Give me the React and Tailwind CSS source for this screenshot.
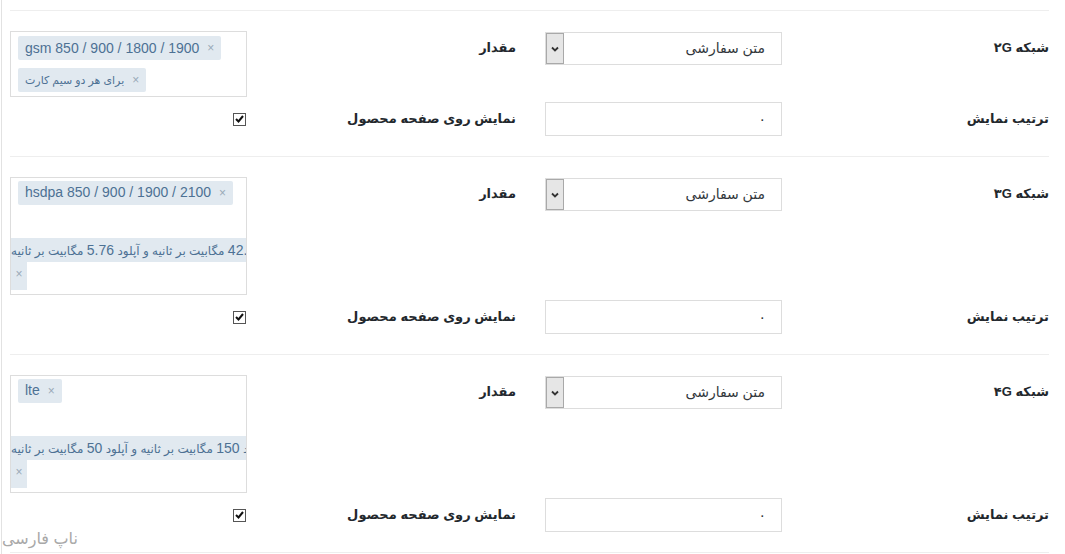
import React from 'react';

const fa = "font-['Liberation_Sans','DejaVu_Sans',sans-serif]";

function Label({ children, className = '' }) {
  return (
    <div className={`h-[33px] flex items-center text-[13px] font-bold text-[#23282d] ${className}`}>
      {children}
    </div>
  );
}

function Select() {
  return (
    <div className="mt-[1px] w-[237px] h-[33px] border border-[#dddddd] bg-white flex items-center">
      <span className="flex-1 pr-[16px] text-[14px] text-[#32373c]">متن سفارشی</span>
      <div className="w-[18px] h-full border border-[#a9a9a9] bg-[#e6e6e6] flex items-center justify-center">
        <svg width="8" height="6" viewBox="0 0 8 6">
          <path d="M1 1.5 L4 4.5 L7 1.5" stroke="#333" strokeWidth="1.8" fill="none" />
        </svg>
      </div>
    </div>
  );
}

function Tag({ children }) {
  return (
    <div className="inline-flex items-center h-[24px] px-[7px] bg-[#e1e9f0] rounded-[2px] text-[#4d7194]">
      {children}
      <span className="ml-[8px] text-[12px] text-[#9aa9b8]">×</span>
    </div>
  );
}

// long select2 choice: text runs past the box and the remove mark wraps below
function LongTag({ down, up }) {
  return (
    <div className="mt-auto w-full" dir="ltr">
      <div className="h-[24px] leading-[24px] bg-[#e1e9f0] overflow-hidden whitespace-nowrap text-left text-[12px] text-[#4d7194]">
        <span dir="rtl">
          دانلود <span className="text-[14px]">{down}</span> مگابیت بر ثانیه و آپلود <span className="text-[14px]">{up}</span> مگابیت بر ثانیه
        </span>
      </div>
      <div className="w-[16px] h-[28px] bg-[#e1e9f0] flex justify-center pt-[3px] text-[12px] text-[#9aa9b8]">×</div>
    </div>
  );
}

function Checkbox() {
  return (
    <div className="w-[13px] h-[13px] border border-[#555] bg-white flex items-center justify-center">
      <svg width="9" height="8" viewBox="0 0 9 8">
        <path d="M1 4 L3.5 6.5 L8 1" stroke="#111" strokeWidth="2" fill="none" />
      </svg>
    </div>
  );
}

function Section({ title, children, tall }) {
  return (
    <section className="border-t border-[#eeeeee] pt-[20px] pb-[20px]">
      <div className="grid grid-cols-[267px_237px_298px_238px] items-start">
        <Label>{title}</Label>
        <Select />
        <Label className="pr-[29px]">مقدار</Label>
        <div
          dir="ltr"
          className={`w-[237px] border border-[#dddddd] bg-white flex flex-col items-start ${tall ? 'h-[118px]' : 'h-[66px] px-[7px] pt-[4px] gap-[8px]'}`}
        >
          {children}
        </div>
      </div>
      <div className="grid grid-cols-[267px_237px_298px_238px] items-center mt-[5px]">
        <Label>ترتیب نمایش</Label>
        <div className="w-[237px] h-[34px] border border-[#dddddd] bg-white flex items-center pr-[15px] text-[14px] text-[#32373c]">
          ۰
        </div>
        <Label className="pr-[29px]">نمایش روی صفحه محصول</Label>
        <div className="flex justify-start pr-[1px]">
          <Checkbox />
        </div>
      </div>
    </section>
  );
}

export default function App() {
  return (
    <div className={`relative w-[1065px] h-[554px] overflow-hidden bg-white ${fa}`} dir="rtl">
      <div className="w-[1064px] h-full border-l border-[#e2e2e2] pt-[10px]">
        <div className="mr-[16px] ml-[8px]">
          <Section title="شبکه ۲G">
            <Tag><span className="text-[14px]">gsm 850 / 900 / 1800 / 1900</span></Tag>
            <Tag><span dir="rtl" className="text-[11px]">برای هر دو سیم کارت</span></Tag>
          </Section>

          <Section title="شبکه ۳G" tall>
            <div className="px-[7px] pt-[2px] w-full">
              <Tag><span className="text-[14px]">hsdpa 850 / 900 / 1900 / 2100</span></Tag>
            </div>
            <div className="w-full flex-1 flex flex-col pb-[4px]">
              <LongTag down="42.2" up="5.76" />
            </div>
          </Section>

          <Section title="شبکه ۴G" tall>
            <div className="px-[7px] pt-[2px] w-full">
              <Tag><span className="text-[14px]">lte</span></Tag>
            </div>
            <div className="w-full flex-1 flex flex-col pb-[4px]">
              <LongTag down="150" up="50" />
            </div>
          </Section>
          <div className="border-t border-[#eeeeee]" />
        </div>
      </div>
      <div className="absolute left-[2px] top-[527px] text-[16px] text-[#a8a8a8]">ناپ فارسی</div>
    </div>
  );
}
